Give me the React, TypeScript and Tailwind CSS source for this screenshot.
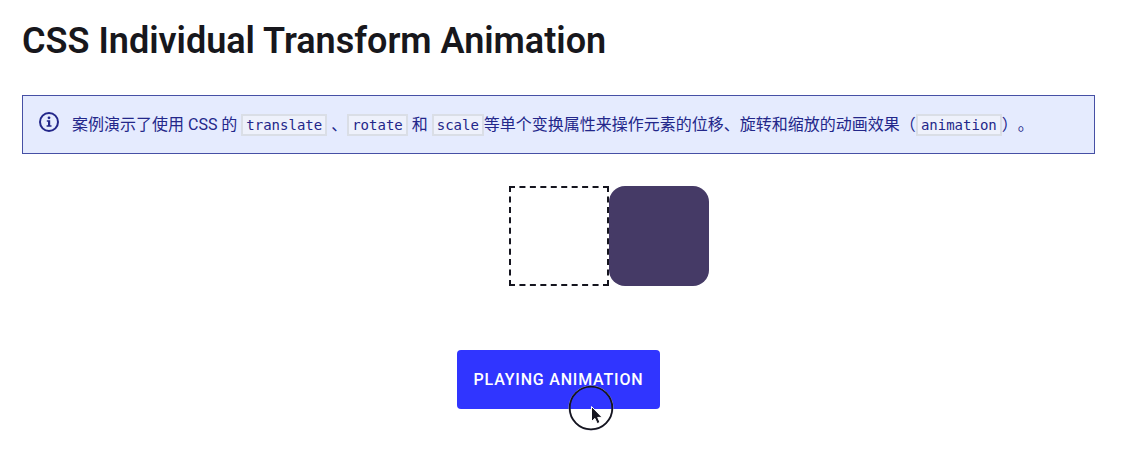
import type { ReactNode } from "react";

function Code({ children }: { children: ReactNode }) {
  return (
    <code className="border-2 border-[#dadee6] bg-[#eef1fb] px-[3px] py-px font-['DejaVu_Sans_Mono',monospace] text-sm">
      {children}
    </code>
  );
}

function InfoIcon() {
  return (
    <svg viewBox="0 0 22 22" className="size-[22px] shrink-0" fill="none" aria-hidden="true">
      <circle cx="11" cy="11" r="9" stroke="currentColor" strokeWidth="2" />
      <circle cx="11" cy="6.8" r="1.4" fill="currentColor" />
      <path d="M8.8 9.2h3.4v5h1.3v1.6H8.6v-1.6H10v-3.4H8.8z" fill="currentColor" />
    </svg>
  );
}

function Pointer() {
  return (
    <svg
      viewBox="0 0 46 46"
      className="pointer-events-none absolute top-[35px] left-[111px] size-[46px]"
      fill="none"
      aria-hidden="true"
    >
      <circle cx="23" cy="23" r="22" stroke="#b9b9cc" strokeWidth="1" />
      <circle cx="23" cy="23" r="21.3" stroke="#15151f" strokeWidth="1.8" />
      <path
        d="M23.5 21.5v15l3.4-3.1 2.3 5.2 2.8-1.2-2.3-5h4.5z"
        fill="#15151f"
        stroke="#fff"
        strokeWidth="1"
      />
    </svg>
  );
}

export default function App() {
  return (
    <main className="flex flex-col items-center bg-white pt-4 pr-[27px] pb-11 pl-[22px] font-[Roboto,'Noto_Sans_CJK_SC',sans-serif]">
      <h1 className="self-stretch text-4xl leading-[50px] font-semibold text-[#17171c]">
        CSS Individual Transform Animation
      </h1>

      <div className="mt-[29px] flex items-start gap-3 self-stretch border border-[#4650a5] bg-[#e5ebfe] px-[15px] pt-[15px] pb-3.5 text-[#23278a]">
        <InfoIcon />
        <p className="text-base leading-7 [text-spacing-trim:space-all]">
          案例演示了使用 CSS 的 <Code>translate</Code> 、<Code>rotate</Code> 和 <Code>scale</Code>
          等单个变换属性来操作元素的位移、旋转和缩放的动画效果（<Code>animation</Code>）。
        </p>
      </div>

      <div className="mt-8 size-[100px] border-2 border-dashed border-[#15151f]">
        <div className="-m-0.5 size-[100px] translate-x-full rounded-2xl bg-[#453a66]" />
      </div>

      <div className="relative mt-16">
        <button
          type="button"
          className="rounded-sm bg-[#3035ff] px-[17px] py-[17px] text-base leading-[25px] font-medium tracking-wider text-white uppercase"
        >
          Playing animation
        </button>
        <Pointer />
      </div>
    </main>
  );
}
